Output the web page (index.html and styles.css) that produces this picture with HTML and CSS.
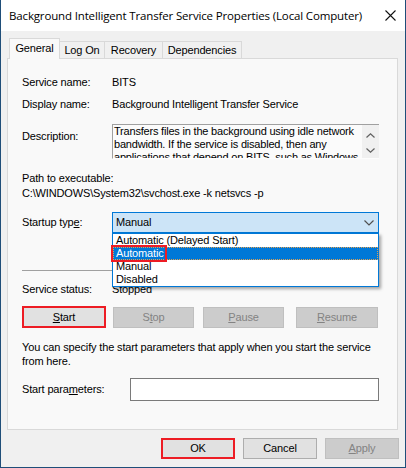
FILE: index.html
```html
<!DOCTYPE html>
<html>
<head>
<meta charset="utf-8">
<title>Background Intelligent Transfer Service Properties</title>
<link rel="stylesheet" href="styles.css">
</head>
<body>
<div class="window">
  <div class="titlebar">
    <span class="title">Background Intelligent Transfer Service Properties (Local Computer)</span>
    <svg class="close" width="11" height="11" viewBox="0 0 11 11"><path d="M0.5 0.5L10.5 10.5M10.5 0.5L0.5 10.5" stroke="#111" stroke-width="1.1" fill="none"/></svg>
  </div>
  <div class="body">
    <div class="tabs">
      <div class="tab active t-general">General</div>
      <div class="tab t-logon">Log On</div>
      <div class="tab t-recovery">Recovery</div>
      <div class="tab t-deps">Dependencies</div>
    </div>
    <div class="panel">
      <div class="row r-name"><span class="lbl">Service name:</span><span>BITS</span></div>
      <div class="row r-display"><span class="lbl">Display name:</span><span>Background Intelligent Transfer Service</span></div>
      <div class="row r-desc">
        <span class="lbl lbl-desc">Description:</span>
        <div class="descbox">
          <div class="desctext">Transfers files in the background using idle network<br>bandwidth. If the service is disabled, then any<br>applications that depend on BITS, such as Windows</div>
          <div class="scrollbar">
            <svg width="9" height="5" viewBox="0 0 9 5"><path d="M0.5 4.5L4.5 0.8L8.5 4.5" stroke="#606060" stroke-width="1.2" fill="none"/></svg>
            <svg width="9" height="5" viewBox="0 0 9 5"><path d="M0.5 0.5L4.5 4.2L8.5 0.5" stroke="#606060" stroke-width="1.2" fill="none"/></svg>
          </div>
        </div>
      </div>
      <div class="r-path">Path to executable:</div>
      <div class="r-pathval">C:\WINDOWS\System32\svchost.exe -k netsvcs -p</div>
      <div class="row r-startup">
        <span class="lbl lbl-startup">Startup typ<u>e</u>:</span>
        <div class="combo">
          <span class="combo-text">Manual</span>
          <svg class="chev" width="10" height="6" viewBox="0 0 10 6"><path d="M0.5 0.5L5 5L9.5 0.5" stroke="#505050" stroke-width="1.2" fill="none"/></svg>
          <div class="dropdown">
            <div class="item">Automatic (Delayed Start)</div>
            <div class="item selected"><span class="mark"></span>Automatic</div>
            <div class="item">Manual</div>
            <div class="item">Disabled</div>
          </div>
        </div>
      </div>
      <div class="separator"></div>
      <div class="row r-status"><span class="lbl">Service status:</span><span>Stopped</span></div>
      <div class="btnrow">
        <button class="btn btn-start highlight"><u>S</u>tart</button>
        <button class="btn btn-stop disabled">S<u>t</u>op</button>
        <button class="btn btn-pause disabled"><u>P</u>ause</button>
        <button class="btn btn-resume disabled"><u>R</u>esume</button>
      </div>
      <div class="para">You can specify the start parameters that apply when you start the service<br>from here.</div>
      <div class="row r-params">
        <span class="lbl lbl-params">Start para<u>m</u>eters:</span>
        <div class="input"></div>
      </div>
    </div>
    <div class="footer">
      <button class="btn fbtn highlight">OK</button>
      <button class="btn fbtn">Cancel</button>
      <button class="btn fbtn disabled"><u>A</u>pply</button>
    </div>
  </div>
</div>
</body>
</html>
```

FILE: styles.css
```css
html, body {
  margin: 0;
  padding: 0;
  background: #f0f0f0;
}

body {
  font-family: "Liberation Sans", Arial, sans-serif;
  font-size: 11px;
  letter-spacing: -0.15px;
  color: #000;
}

.window {
  width: 406px;
  height: 468px;
  box-sizing: border-box;
  border: 1px solid #1f4e79;
  border-top: none;
  background: #f0f0f0;
  display: flex;
  flex-direction: column;
}

.titlebar {
  height: 31px;
  flex: none;
  background: #fff;
  display: flex;
  align-items: center;
  padding: 0 9px 0 8px;
}

.title {
  flex: 1;
  font-family: "Open Sans", "Noto Sans", sans-serif;
  font-size: 11.5px;
  letter-spacing: -0.15px;
  color: #000;
  white-space: nowrap;
  margin-top: -1px;
}

.close {
  margin-top: -1px;
}

.body {
  padding: 7px 7px 0 6px;
  display: flex;
  flex-direction: column;
}

.tabs {
  display: flex;
  align-items: flex-end;
  height: 20px;
  padding-left: 2px;
}

.tab {
  box-sizing: border-box;
  height: 17px;
  line-height: 16px;
  text-align: center;
  background: #f0f0f0;
  border-top: 1px solid #d9d9d9;
  border-right: 1px solid #d9d9d9;
  white-space: nowrap;
}

.tab.active {
  height: 21px;
  line-height: 18px;
  margin-bottom: -1px;
  background: #f9f9f9;
  border-left: 1px solid #d9d9d9;
  position: relative;
  z-index: 1;
}

.t-general { width: 51px; }
.t-logon { width: 45px; }
.t-recovery { width: 58px; }
.t-deps { width: 79px; }

.panel {
  height: 372px;
  box-sizing: border-box;
  border: 1px solid #d9d9d9;
  background: #f9f9f9;
  padding: 17px 18px 0 14px;
  display: flex;
  flex-direction: column;
}

.row {
  display: flex;
  line-height: 13px;
  white-space: nowrap;
}

.lbl {
  width: 90px;
  flex: none;
}

.r-display { margin-top: 9px; }

.r-desc { margin-top: 13px; align-items: flex-start; }
.lbl-desc { margin-top: 6px; }

.descbox {
  width: 267px;
  height: 35px;
  box-sizing: border-box;
  border-top: 1px solid #a0a0a0;
  border-left: 1px solid #a0a0a0;
  border-bottom: 1px solid #fdfdfd;
  background: #fbfbfb;
  display: flex;
  overflow: hidden;
}

.desctext {
  flex: 1;
  padding-left: 1px;
  line-height: 13px;
  letter-spacing: -0.2px;
  white-space: nowrap;
  overflow: hidden;
}

.scrollbar {
  width: 17px;
  flex: none;
  background: #f0f0f0;
  display: flex;
  flex-direction: column;
  align-items: center;
  justify-content: space-between;
  padding: 8px 0 5px;
  box-sizing: border-box;
}

.scrollbar svg { display: block; }

.r-path { margin-top: 13px; line-height: 13px; }
.r-pathval { margin-top: 2px; line-height: 13px; white-space: nowrap; }

.r-startup { margin-top: 12px; align-items: flex-start; }
.lbl-startup { margin-top: 4px; }

.combo {
  position: relative;
  width: 267px;
  height: 21px;
  box-sizing: border-box;
  border: 1px solid #0078d7;
  background: #cce4f7;
  display: flex;
  align-items: center;
  padding-left: 3px;
}

.combo-text {
  flex: 1;
  line-height: 19px;
}

.chev {
  margin-right: 4px;
}

.dropdown {
  position: absolute;
  left: -1px;
  right: -1px;
  top: 100%;
  margin-top: 1px;
  box-sizing: border-box;
  border: 1px solid #0078d7;
  background: #fff;
  box-shadow: 2px 2px 3px rgba(0, 0, 0, 0.35);
  z-index: 5;
}

.item {
  position: relative;
  height: 13px;
  line-height: 13px;
  padding-left: 3px;
  color: #000;
}

.item.selected {
  background: #0078d7;
  color: #fff;
  outline: 1px dotted #e0a050;
  outline-offset: -1px;
}

.mark {
  position: absolute;
  left: -2px;
  top: -2px;
  width: 56px;
  height: 17px;
  box-sizing: border-box;
  border: 2px solid #ed1c24;
}

.separator {
  margin-top: 37px;
  height: 1px;
  background: #a0a0a0;
}

.r-status { margin-top: 12px; }

.btnrow {
  margin-top: 10px;
  display: flex;
  align-items: flex-end;
  height: 22px;
}

.btn {
  font-family: "Liberation Sans", Arial, sans-serif;
  font-size: 11px;
  letter-spacing: -0.15px;
  color: #000;
  background: #e1e1e1;
  border: 1px solid #adadad;
  box-sizing: border-box;
  height: 21px;
  padding: 0;
  margin: 0;
  line-height: 19px;
  text-align: center;
}

.btn.disabled {
  background: #cccccc;
  border-color: #bfbfbf;
  color: #838383;
}

.btn.highlight {
  border: 2px solid #ed1c24;
  line-height: 17px;
}

.btn-start { width: 84px; height: 22px; line-height: 18px; }
.btn-stop { width: 81px; margin-left: 7px; }
.btn-pause { width: 81px; margin-left: 9px; }
.btn-resume { width: 82px; margin-left: 12px; }

.para {
  margin-top: 12px;
  line-height: 14px;
  white-space: nowrap;
}

.r-params { margin-top: 10px; align-items: flex-start; }
.lbl-params { width: 108px; margin-top: 5px; }

.input {
  width: 249px;
  height: 23px;
  box-sizing: border-box;
  border: 1px solid #7a7a7a;
  background: #fff;
}

.footer {
  margin-top: 8px;
  margin-right: -1px;
  display: flex;
  justify-content: flex-end;
  gap: 8px;
}

.fbtn {
  width: 74px;
}
```
